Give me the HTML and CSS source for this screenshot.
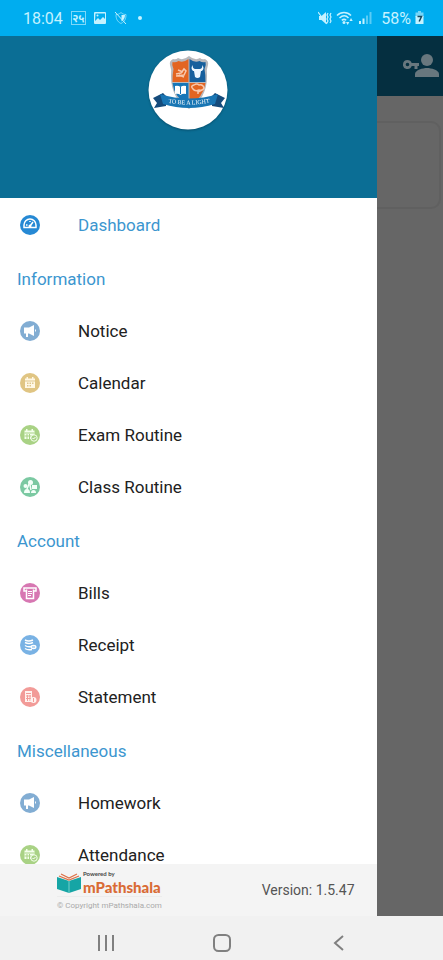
FILE: index.html
```html
<!DOCTYPE html>
<html lang="en">
<head>
<meta charset="utf-8">
<meta name="viewport" content="width=device-width, initial-scale=1">
<title>mPathshala</title>
<link rel="stylesheet" href="styles.css">
</head>
<body>
<div class="phone">
  <header class="status">
    <span class="clock">18:04</span>
    <span class="date-badge">२५</span>
    <svg class="s-icon" width="14" height="14" viewBox="0 0 14 14"><path fill="currentColor" fill-rule="evenodd" d="M2 1h10a1 1 0 0 1 1 1v10a1 1 0 0 1-1 1H2a1 1 0 0 1-1-1V2a1 1 0 0 1 1-1zm0 9 3-3 2 2 3-3 2 2V2.500H2.500zM4.500 3.500a1 1 0 1 1 0 2 1 1 0 0 1 0-2z"/></svg>
    <svg class="s-icon" width="14" height="14" viewBox="0 0 14 14" fill="none" stroke="currentColor"><path d="M2 3.500C4 3.500 5.500 3 7 1.500 8.500 3 10 3.500 12 3.500c0 4-1 7-5 9-4-2-5-5-5-9z" opacity=".6"/><path fill="currentColor" stroke="none" d="M7.500 4h3.500c0 3-1 5-3.500 6.500z"/><path d="m1 1 11 12"/></svg>
    <span class="dot"></span>
    <span class="spacer"></span>
    <span class="signals">
      <svg width="14" height="14" viewBox="0 0 14 14"><path fill="currentColor" d="M1 5h2.500L8 1v12L3.500 9H1z"/><path fill="none" stroke="currentColor" stroke-width="1.200" d="m0 1 9 12M10 2l-1 2 1 2-1 2 1 2-1 2M13 2l-1 2 1 2-1 2 1 2-1 2"/></svg>
      <svg width="18" height="14" viewBox="0 0 18 14"><path fill="none" stroke="currentColor" stroke-width="1.500" d="M1 4.500c4-4 10-4 14 0M3.500 7c3-2.700 6.500-2.700 9 0M5.800 9.300c1.500-1.200 3-1.200 4.400 0"/><circle cx="8" cy="11.500" r="1.500" fill="currentColor"/><path fill="currentColor" d="m10 11 1.700 3 1.600-3zm3.500-1L15 7l1.700 3z"/></svg>
      <svg width="14" height="14" viewBox="0 0 14 14" fill="currentColor"><path d="M1 10h2v3H1zM4.500 7.500h2V13h-2z"/><path opacity=".45" d="M8 4.500h2V13H8zM11.500 1h2v12h-2z"/></svg>
    </span>
    <span class="battery-text">58%</span>
    <svg width="9" height="14" viewBox="0 0 9 14"><path fill="currentColor" opacity=".6" d="M3 0h3v1.500h2.500V6h-8V1.500H3z"/><path fill="currentColor" d="M.5 5h8v8h-8z"/><path fill="none" stroke="#16485e" stroke-width="1.500" d="M2.500 5.500h4l-2.300 5"/></svg>
  </header>

  <div class="stage">
    <main class="page">
      <div class="appbar">
        <svg width="36" height="24" viewBox="0 0 36 24" fill="#68777e"><circle cx="24" cy="6" r="6"/><path d="M12 23v-3c0-4 8-6 12-6s12 2 12 6v3z"/><path fill-rule="evenodd" d="M4.500 6a4.500 4.500 0 0 1 4.200 3H16v3h-1.500v3h-3v-3H8.700A4.500 4.500 0 1 1 4.500 6zm0 2.700a1.800 1.800 0 1 0 0 3.600 1.800 1.800 0 0 0 0-3.600z"/></svg>
      </div>
      <div class="card"></div>
    </main>

    <aside class="drawer">
      <div class="drawer-head">
        <svg class="crest" width="80" height="80" viewBox="0 0 80 80" role="img" aria-label="School crest">
          <circle cx="40" cy="40" r="39.500" fill="#fff"/>
          <g transform="translate(1 -3)">
            <path fill="#b8b9bd" d="M24 12q3 1 5-1 5 3 11-2 6 5 11 2 2 2 5 1 4 2 3 6-2 5-1 11 0 23-18 33Q22 52 22 29q1-6-1-11-1-4 3-6z"/>
            <path fill="#e36522" d="M39.500 12q-5 4-10 2-3 2-6 1-1 3 1 7-1 5-1 13h16z"/>
            <path fill="#165f9d" d="M40.500 12q5 4 10 2 3 2 6 1 1 3-1 7 1 5 1 13h-16z"/>
            <path fill="#1676b8" d="M23.500 36h16v23Q25 50 23.500 36z"/>
            <path fill="#e36522" d="M40.500 36h16q-2 14-16 23z"/>
            <g fill="none" stroke="#f8c8ad" stroke-width="1.500"><path d="m27 27 5-1 3-4 2 2-2 4-8 1m2-6 5 2m-4 3 5 2"/><path d="M44 42q-3-3 1-4 3-2 5 0 4-1 5 3-1 3-5 2-4 2-6-1zm5 1v4m0-2 4-2"/></g>
            <path fill="#eef7ff" d="M44 18q-1 3 2 4h5q3-1 2-4 3 3 0 6h-1l-1 6q-2.500 2-5 0l-1-6h-1q-3-3 0-6z"/>
            <path fill="#fff" d="M26 39q3-1 5.500 1 2.500-2 5.500-1v8q-3-1-5.500 1-2.500-2-5.500-1z"/>
            <path stroke="#1676b8" d="M31.500 40v7"/>
            <path fill="#154b7b" d="m4 51 10-5 3 3v10l-12 2 3-5zm72 0-10-5-3 3v10l12 2-3-5z"/>
            <path fill="#1976b4" d="M11 47q29 9 58 0l-3 10q-26 8-52 0z"/>
            <path id="motto-line" fill="none" d="M15 55q25 5 50 0"/>
            <text class="motto" text-anchor="middle"><textPath href="#motto-line" startOffset="50%">TO BE A LIGHT</textPath></text>
          </g>
        </svg>
      </div>

      <nav class="menu">
        <a class="item active" href="#">
          <svg class="icon" viewBox="0 0 20 20"><circle cx="10" cy="10" r="10" fill="#2689d4"/><path fill="none" stroke="#fff" stroke-width="1.500" d="M4 12.500V10a6 6 0 0 1 12 0v2.500z"/><path stroke="#fff" stroke-width="1.500" d="m10 11 3-4M6 10h1.500M10 6v1"/><circle cx="10" cy="11" r="1.500" fill="#fff"/></svg>
          <span>Dashboard</span></a>

        <h2 class="group">Information</h2>
        <a class="item" href="#">
          <svg class="icon" viewBox="0 0 20 20"><circle cx="10" cy="10" r="10" fill="#82add3"/><path fill="#fff" d="M4 6.500h5l5-2.500v11l-5-2.500H8V16H6v-3.500H4zM15 8q2 1.500 0 3z"/></svg>
          <span>Notice</span></a>
        <a class="item" href="#">
          <svg class="icon" viewBox="0 0 20 20"><circle cx="10" cy="10" r="10" fill="#e0c583"/><path fill="#fff8e5" d="M5 5.500h1.500V4H8v1.500h4V4h1.500v1.500H15V15H5z"/><path stroke="#dfc78d" d="M5 8h10"/><path fill="#dfc78d" d="M7 9.500h1.500V11H7zm2.500 0H11V11H9.500zm2.500 0h1.500V11H12zM7 12h1.500v1.500H7zm2.500 0H11v1.500H9.500z"/></svg>
          <span>Calendar</span></a>
        <a class="item" href="#">
          <svg class="icon" viewBox="0 0 20 20"><circle cx="10" cy="10" r="10" fill="#a9d285"/><path fill="#f4ffec" d="M4.500 5.500H6V4h1.500v1.500h4V4H13v1.500h1.500V14h-10z"/><path stroke="#a9d285" d="M4.500 8h10M7 9v5m2.500-5v5M4.500 11h8"/><circle cx="14" cy="13" r="3.200" fill="#a9d285" stroke="#f4ffec"/><path fill="none" stroke="#fff" d="M12.500 13l1 1 2-2"/></svg>
          <span>Exam Routine</span></a>
        <a class="item" href="#">
          <svg class="icon" viewBox="0 0 20 20"><circle cx="10" cy="10" r="10" fill="#7bc9a2"/><g fill="#f3fff8"><circle cx="10.500" cy="5.500" r="2.500"/><circle cx="5.500" cy="9" r="2"/><path d="M12 8h5v4h-5zM4 16q0-4 3-4t3 4zm7 0q0-3 2.500-3t2.500 3z"/></g><path stroke="#f3fff8" stroke-width="1.500" d="m9 7-2 5m3-4 1 5"/></svg>
          <span>Class Routine</span></a>

        <h2 class="group">Account</h2>
        <a class="item" href="#">
          <svg class="icon" viewBox="0 0 20 20"><circle cx="10" cy="10" r="10" fill="#d777b2"/><path fill="none" stroke="#fff" stroke-width="1.500" d="M6 8H4V5h12v3h-2M6.500 6.500v9h7v-9"/><path stroke="#fff" d="M8 8.500h4M8 10.500h4M8 12.500h3"/></svg>
          <span>Bills</span></a>
        <a class="item" href="#">
          <svg class="icon" viewBox="0 0 20 20"><circle cx="10" cy="10" r="10" fill="#79b2e4"/><g fill="none" stroke="#fff" stroke-width="1.500"><path d="M5 5q3.500 2 8 0M5 7.500q4 2 8 0M5 10.500q3 2 6 1M5 13.500q3 2 7 1"/></g><ellipse cx="13.500" cy="12" rx="3" ry="2.200" fill="#fff"/><path stroke="#79b2e4" d="M12 12h3"/></svg>
          <span>Receipt</span></a>
        <a class="item" href="#">
          <svg class="icon" viewBox="0 0 20 20"><circle cx="10" cy="10" r="10" fill="#f29b98"/><path fill="#fff2ef" d="M5 4h7v11H5z"/><path stroke="#f29b98" d="M6 6.500h5M6 9h5M6 11.500h5M7.500 8v6M10 8v6"/><circle cx="13.500" cy="13" r="3" fill="#fff2ef"/><path stroke="#f29b98" d="M13.500 11v4"/></svg>
          <span>Statement</span></a>

        <h2 class="group">Miscellaneous</h2>
        <a class="item" href="#">
          <svg class="icon" viewBox="0 0 20 20"><circle cx="10" cy="10" r="10" fill="#82add3"/><path fill="#fff" d="M4 6.500h5l5-2.500v11l-5-2.500H8V16H6v-3.500H4zM15 8q2 1.500 0 3z"/></svg>
          <span>Homework</span></a>
        <a class="item" href="#">
          <svg class="icon" viewBox="0 0 20 20"><circle cx="10" cy="10" r="10" fill="#a9d285"/><path fill="#f4ffec" d="M4.500 5.500H6V4h1.500v1.500h4V4H13v1.500h1.500V14h-10z"/><path stroke="#a9d285" d="M4.500 8h10M7 9v5m2.500-5v5M4.500 11h8"/><circle cx="14" cy="13" r="3.200" fill="#a9d285" stroke="#f4ffec"/><path fill="none" stroke="#fff" d="M12.500 13l1 1 2-2"/></svg>
          <span>Attendance</span></a>
      </nav>

      <footer class="foot">
        <div class="brand">
          <div class="brand-row">
            <svg width="24" height="22" viewBox="0 0 24 22"><path fill="#16a5a5" d="m0 5 12 4 12-4v12l-12 4-12-4z"/><path stroke="#72d0cc" d="M12 9v12"/><path fill="none" stroke="#dc7046" stroke-width="1.200" d="m2 4 10 4 10-4M4 2l8 4 8-4"/></svg>
            <div class="brand-text">
              <span class="powered">Powered by</span>
              <span class="name">mPathshala</span>
            </div>
          </div>
          <div class="copy">© Copyright mPathshala.com</div>
        </div>
        <div class="version">Version: 1.5.47</div>
      </footer>
    </aside>
  </div>

  <div class="sysnav">
    <button type="button" aria-label="Recent apps"><svg width="18" height="18" viewBox="0 0 18 18"><path fill="none" stroke="currentColor" stroke-width="2" d="M2 1v16M9 1v16M16 1v16"/></svg></button>
    <button type="button" aria-label="Home"><svg width="18" height="18" viewBox="0 0 18 18"><rect x="1" y="1" width="16" height="16" rx="4.500" fill="none" stroke="currentColor" stroke-width="2"/></svg></button>
    <button type="button" aria-label="Back"><svg width="18" height="18" viewBox="0 0 18 18"><path fill="none" stroke="currentColor" stroke-width="2" d="M14 2 6 9l8 7"/></svg></button>
  </div>
</div>
</body>
</html>
```
FILE: styles.css
```css
* { box-sizing: border-box; }

body {
  margin: 0;
  font-family: Roboto, "Noto Sans", sans-serif;
  color: #212121;
}

svg { flex: none; display: block; }

.phone {
  display: flex;
  flex-direction: column;
  height: 100vh;
  overflow: hidden;
}

/* Status bar */
.status {
  flex: none;
  display: flex;
  align-items: center;
  height: 36px;
  padding: 0 19px 0 23px;
  background: #00adef;
  color: #c5f2ff;
  font-size: 16px;
}

.date-badge {
  display: flex;
  align-items: center;
  justify-content: center;
  width: 15px;
  height: 14px;
  margin-left: 8px;
  border: 1px solid #7fd8f8;
  font-family: "Noto Sans", sans-serif;
  font-size: 11px;
  font-weight: 700;
  line-height: 12px;
}

.s-icon { margin-left: 7px; }

.dot {
  width: 4px;
  height: 4px;
  margin-left: 10px;
  border-radius: 50%;
  background: currentColor;
}

.spacer { flex: 1; }

.signals { display: flex; gap: 4px; }

.battery-text { margin: 0 4px 0 9px; }

/* Dimmed page with the drawer over it */
.stage {
  position: relative;
  flex: 1;
  min-height: 0;
}

.page {
  height: 100%;
  background: #666;
}

.appbar {
  display: flex;
  align-items: center;
  justify-content: flex-end;
  height: 60px;
  padding-right: 4px;
  background: #052f40;
}

.card {
  height: 88px;
  margin: 25px 2px 0;
  border: 2px solid #606060;
  border-radius: 10px;
}

.drawer {
  position: absolute;
  inset: 0 15% 0 0;
  display: flex;
  flex-direction: column;
  background: #fff;
}

.drawer-head {
  flex: none;
  display: flex;
  justify-content: center;
  height: 162px;
  padding-top: 14px;
  background: #0b6e95;
}

.crest { filter: drop-shadow(0 1px 1px #07506e); }

.motto {
  fill: #fff;
  font-family: "Liberation Serif", serif;
  font-size: 6px;
}

/* Menu */
.menu {
  flex: 1;
  min-height: 0;
  padding-top: 1px;
  overflow: hidden;
}

.item {
  display: flex;
  align-items: center;
  gap: 38px;
  height: 52px;
  padding-left: 20px;
  color: inherit;
  font-size: 17px;
  text-decoration: none;
}

.active { color: #3c96cf; }

.icon { width: 20px; height: 20px; }

.group {
  height: 54px;
  margin: 0;
  padding: 2px 17px 0;
  color: #3c96cf;
  font-size: 17px;
  font-weight: 400;
  line-height: 52px;
}

/* Drawer footer */
.foot {
  flex: none;
  display: flex;
  justify-content: space-between;
  height: 52px;
  padding: 5px 22px 0 57px;
  background: #f4f4f4;
}

.brand-row {
  display: flex;
  align-items: center;
  gap: 2px;
  height: 28px;
  border-bottom: 1px solid #ececec;
}

.brand-text {
  display: flex;
  flex-direction: column;
  font-family: Lato, sans-serif;
}

.powered {
  color: #444;
  font-size: 6px;
  font-weight: 700;
  line-height: 8px;
}

.name {
  color: #d96b35;
  font-size: 15px;
  font-weight: 900;
  line-height: 18px;
}

.copy {
  color: #aaa;
  font-size: 8px;
  line-height: 18px;
  text-align: center;
}

.version {
  color: #555;
  font-size: 14px;
  line-height: 43px;
}

/* System navigation */
.sysnav {
  flex: none;
  display: flex;
  justify-content: center;
  gap: 80px;
  height: 44px;
  padding-top: 9px;
  background: #f1f1f1;
}

.sysnav button {
  display: flex;
  align-items: center;
  justify-content: center;
  width: 36px;
  height: 36px;
  padding: 0;
  border: 0;
  background: none;
  color: #808080;
}
```
